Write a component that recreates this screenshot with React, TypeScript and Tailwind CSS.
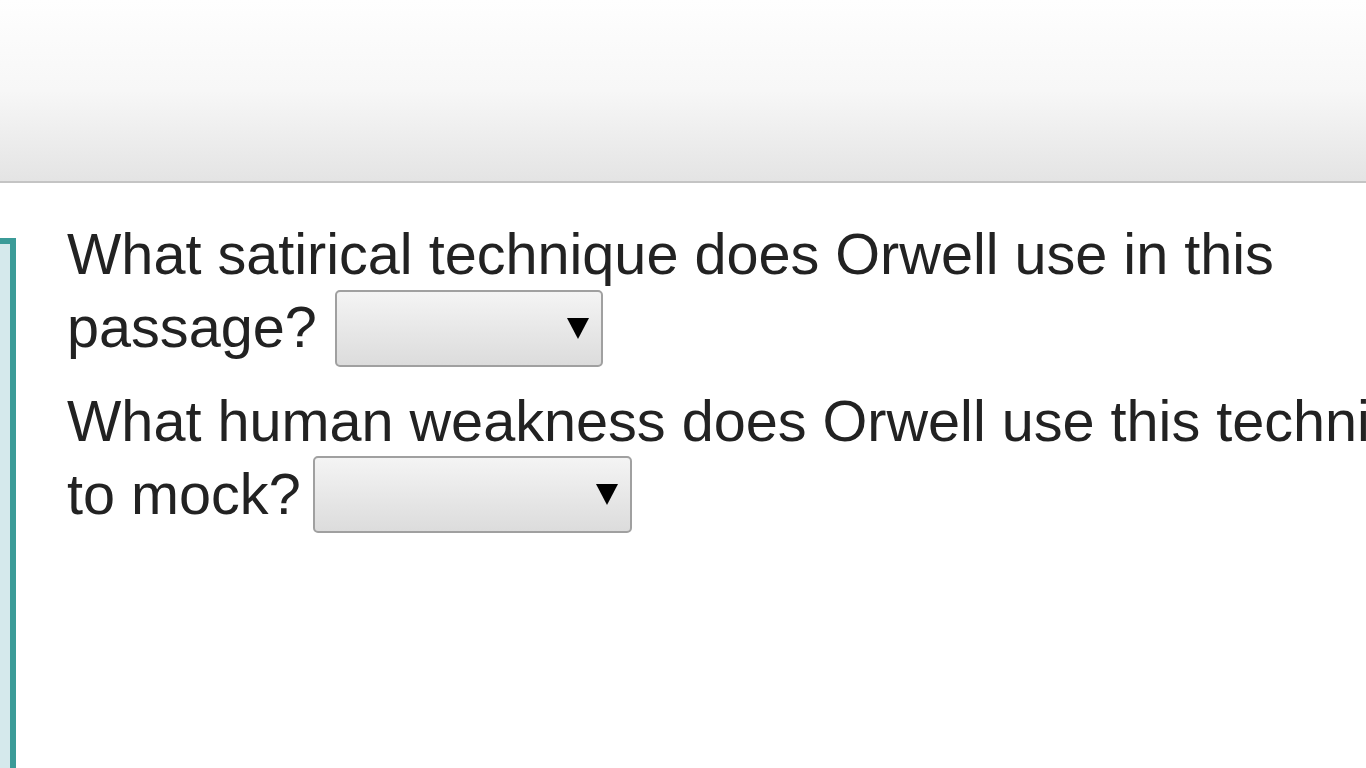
import React from "react";

function Select({ width }: { width: number }) {
  return (
    <div
      className="box-border flex h-[77px] shrink-0 items-center justify-end rounded-[5px] border-[2px] border-[#a0a0a0] bg-gradient-to-b from-[#f4f4f4] to-[#dcdcdc] pr-[12px]"
      style={{ width }}
    >
      <svg width="22" height="21" viewBox="0 0 22 21">
        <polygon points="0,0 22,0 11,21" fill="#000" />
      </svg>
    </div>
  );
}

export default function App() {
  return (
    <div
      className="relative h-[768px] w-[1366px] overflow-hidden bg-white text-[#222222]"
      style={{ fontFamily: '"Liberation Sans", Arial, sans-serif' }}
    >
      <div className="h-[183px] border-b-[2px] border-[#c4c4c4] bg-gradient-to-b from-[#fefefe] via-[#f7f7f7] to-[#e4e4e4]" />
      <div className="flex">
        <div className="mt-[55px] h-[600px] w-[16px] shrink-0 border-r-[6px] border-t-[6px] border-[#3b9b98] bg-[#d5e9ec]" />
        <div className="ml-[51px] mt-[35px] w-[1440px] shrink-0 text-[57.6px] leading-[73px]">
          <div className="whitespace-nowrap">What satirical technique does Orwell use in this</div>
          <div className="flex items-start whitespace-nowrap">
            <span>passage?</span>
            <div className="ml-[18px] -mt-[1px]">
              <Select width={268} />
            </div>
          </div>
          <div className="mt-[18px] whitespace-nowrap">
            What human weakness does Orwell use this technique
          </div>
          <div className="flex items-start whitespace-nowrap">
            <span>to mock?</span>
            <div className="ml-[12px] -mt-[2px]">
              <Select width={319} />
            </div>
          </div>
        </div>
      </div>
    </div>
  );
}
